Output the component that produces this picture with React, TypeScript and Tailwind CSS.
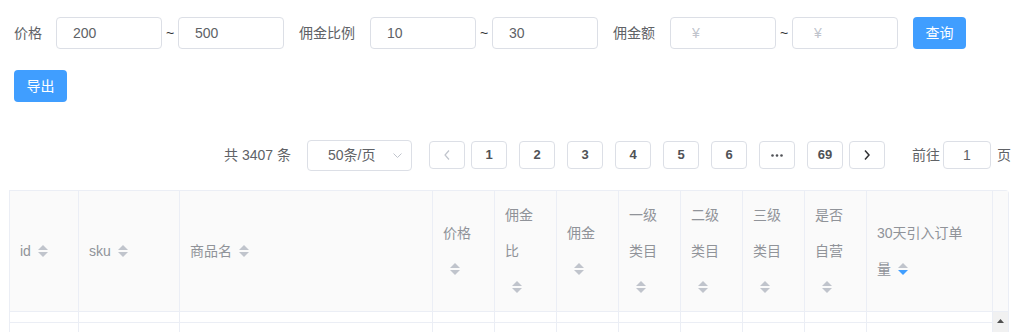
import React from "react";

const font = { fontFamily: '"Liberation Sans", "Noto Sans CJK SC", sans-serif' };

type Col = { w: string; lines: string[]; active?: boolean };

const cols: Col[] = [
  { w: "w-[69px]", lines: ["id"] },
  { w: "w-[101px]", lines: ["sku"] },
  { w: "w-[253px]", lines: ["商品名"] },
  { w: "w-[62px]", lines: ["价格", ""] },
  { w: "w-[62px]", lines: ["佣金", "比", ""] },
  { w: "w-[62px]", lines: ["佣金", ""] },
  { w: "w-[62px]", lines: ["一级", "类目", ""] },
  { w: "w-[62px]", lines: ["二级", "类目", ""] },
  { w: "w-[62px]", lines: ["三级", "类目", ""] },
  { w: "w-[62px]", lines: ["是否", "自营", ""] },
  { w: "w-[126px]", lines: ["30天引入订单", "量"], active: true },
];

const SortCaret = ({ active }: { active?: boolean }) => (
  <span className="inline-flex w-[24px] shrink-0">
    <svg width="10" height="12" viewBox="0 0 10 12" className="ml-[7px]">
      <polygon points="0,5 5,0 10,5" fill="#c0c4cc" />
      <polygon points="0,7 5,12 10,7" fill={active ? "#409eff" : "#c0c4cc"} />
    </svg>
  </span>
);

const RangeInput = ({ value, placeholder }: { value?: string; placeholder?: string }) => (
  <input
    readOnly
    defaultValue={value}
    placeholder={placeholder}
    className={`w-[106px] h-8 border border-[#dcdfe6] rounded-[4px] bg-white text-sm text-[#606266] outline-none placeholder:text-[#c0c4cc] ${
      placeholder ? "pl-[21px]" : "pl-[16px]"
    }`}
  />
);

const Tilde = () => <span className="w-4 text-center text-sm text-[#303133]">~</span>;

const PageBtn = ({ children }: { children: React.ReactNode }) => (
  <div className="w-[36px] h-[28px] border border-[#dcdfe6] rounded-[4px] bg-white flex items-center justify-center text-[13px] font-bold text-[#505256]">
    {children}
  </div>
);

export default function App() {
  return (
    <div className="w-[1024px] h-[332px] overflow-hidden bg-white" style={font}>
      {/* filters */}
      <div className="pt-[17px] pl-[14px]">
        <div className="flex items-center h-8">
          <span className="text-sm text-[#606266] mr-[14px]">价格</span>
          <RangeInput value="200" />
          <Tilde />
          <RangeInput value="500" />
          <span className="text-sm text-[#606266] ml-[15px] mr-[15px]">佣金比例</span>
          <RangeInput value="10" />
          <Tilde />
          <RangeInput value="30" />
          <span className="text-sm text-[#606266] ml-[15px] mr-[15px]">佣金额</span>
          <RangeInput placeholder="¥" />
          <Tilde />
          <RangeInput placeholder="¥" />
          <button className="ml-[15px] w-[53px] h-8 rounded-[4px] bg-[#409eff] text-white text-sm">查询</button>
        </div>
        <button className="mt-[21px] w-[53px] h-8 rounded-[4px] bg-[#409eff] text-white text-sm">导出</button>
      </div>

      {/* pagination */}
      <div className="mt-[37px] h-[32px] flex items-center justify-end pr-[13px] text-sm text-[#606266]">
        <span>共 3407 条</span>
        <div className="ml-[16px] w-[105px] h-[31px] border border-[#dcdfe6] rounded-[4px] flex items-center justify-between pl-[20px] pr-[9px]">
          <span>50条/页</span>
          <svg width="9" height="5" viewBox="0 0 9 5">
            <polyline points="0.5,0.5 4.5,4.5 8.5,0.5" fill="none" stroke="#c0c4cc" strokeWidth="1" />
          </svg>
        </div>
        <div className="ml-[17px] mr-[6px]">
          <PageBtn>
            <svg width="6" height="10" viewBox="0 0 6 10">
              <polyline points="5,0.5 1,5 5,9.5" fill="none" stroke="#c0c4cc" strokeWidth="1.2" />
            </svg>
          </PageBtn>
        </div>
        <div className="flex gap-[12px]">
          {["1", "2", "3", "4", "5", "6"].map((p) => (
            <PageBtn key={p}>{p}</PageBtn>
          ))}
          <PageBtn>
            <svg width="12" height="3" viewBox="0 0 12 3">
              <circle cx="1.5" cy="1.5" r="1.3" fill="#505256" />
              <circle cx="6" cy="1.5" r="1.3" fill="#505256" />
              <circle cx="10.5" cy="1.5" r="1.3" fill="#505256" />
            </svg>
          </PageBtn>
          <PageBtn>69</PageBtn>
        </div>
        <div className="ml-[6px]">
          <PageBtn>
            <svg width="6" height="10" viewBox="0 0 6 10">
              <polyline points="1,0.5 5,5 1,9.5" fill="none" stroke="#303133" strokeWidth="1.5" />
            </svg>
          </PageBtn>
        </div>
        <span className="ml-[27px]">前往</span>
        <input
          readOnly
          defaultValue="1"
          className="ml-[3px] w-[48px] h-[28px] border border-[#dcdfe6] rounded-[4px] text-center text-sm text-[#606266] outline-none"
        />
        <span className="ml-[6px]">页</span>
      </div>

      {/* table */}
      <div className="mt-[19px] ml-[9px] w-[1000px] border-t border-l border-r border-[#ebeef5] rounded-tr-[4px]">
        <div className="flex h-[121px] border-b border-[#ebeef5] bg-[#fafafa]">
          {cols.map((c, i) => (
            <div
              key={i}
              className={`${c.w} shrink-0 border-r border-[#ebeef5] pl-[10px] flex items-center text-sm text-[#909399]`}
            >
              <div>
                {c.lines.map((l, j) => (
                  <div key={j} className="h-[36px] flex items-center whitespace-nowrap">
                    {l}
                    {j === c.lines.length - 1 && <SortCaret active={c.active} />}
                  </div>
                ))}
              </div>
            </div>
          ))}
          <div className="w-[15px] shrink-0" />
        </div>
        <div className="flex">
          <div>
            <div className="flex h-[11px] border-b border-[#ebeef5]">
              {cols.map((c, i) => (
                <div key={i} className={`${c.w} shrink-0 border-r border-[#ebeef5]`} />
              ))}
            </div>
            <div className="flex h-[40px] border-b border-[#ebeef5]">
              {cols.map((c, i) => (
                <div key={i} className={`${c.w} shrink-0 border-r border-[#ebeef5]`} />
              ))}
            </div>
          </div>
          <div className="w-[15px] shrink-0 bg-[#f1f1f1] flex justify-center pt-[7px]">
            <svg width="7" height="4" viewBox="0 0 7 4">
              <polygon points="0,4 3.5,0 7,4" fill="#505050" />
            </svg>
          </div>
        </div>
      </div>
    </div>
  );
}
